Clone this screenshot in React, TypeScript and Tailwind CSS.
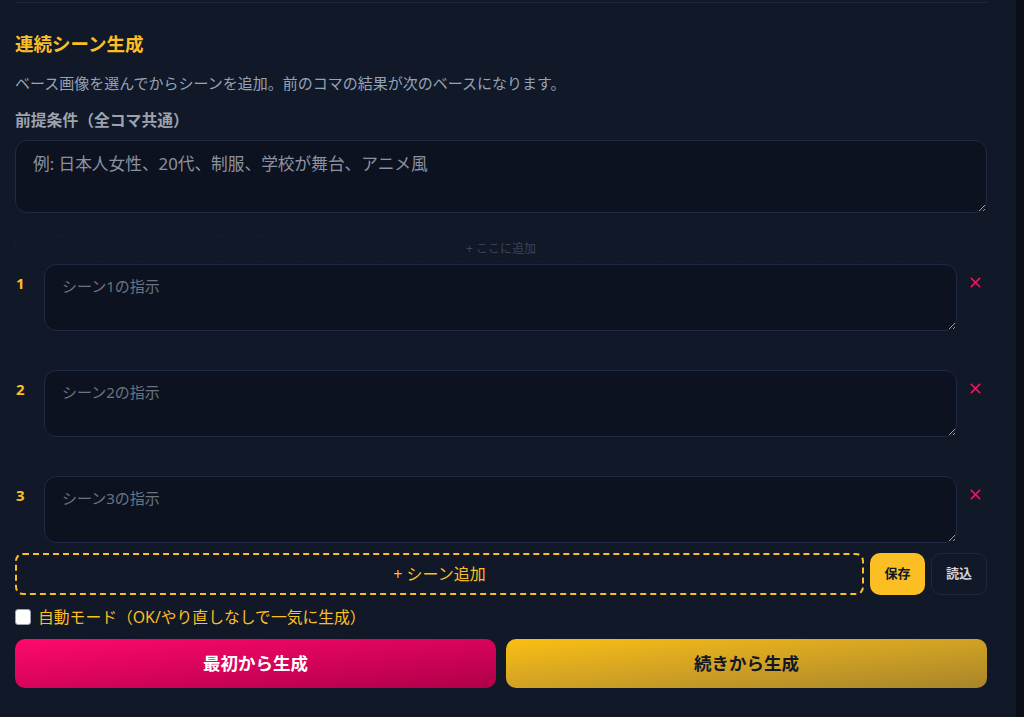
import React from "react";

const font = { fontFamily: '"Noto Sans", "Noto Sans CJK JP", sans-serif' };

function XIcon() {
  return (
    <svg width="11" height="11" viewBox="0 0 11 11" fill="none" stroke="#e8175f" strokeWidth="1.7" strokeLinecap="square">
      <path d="M1.5 1.5 L9.5 9.5 M9.5 1.5 L1.5 9.5" />
    </svg>
  );
}

function Scene({ n }: { n: number }) {
  return (
    <div className="flex items-start">
      <div className="w-[29px] pl-[1px] pt-[9px] text-[15px] font-bold text-[#fbbf24] leading-5">{n}</div>
      <textarea
        className="h-[67px] w-[913px] rounded-[12px] border border-[#1f2a44] bg-[#0d1220] px-[17px] pt-[11px] text-[15px] leading-5 text-gray-300 placeholder:text-[#6b7280] outline-none"
        placeholder={`シーン${n}の指示`}
        style={font}
      />
      <div className="ml-[13px] pt-[13px]">
        <XIcon />
      </div>
    </div>
  );
}

export default function App() {
  return (
    <div className="flex h-[717px] w-[1024px] overflow-hidden bg-[#111827]" style={font}>
      <div className="w-[1016px] pl-[15px] pr-[29px] pt-[2px]">
        <div className="border-t border-[#1e293b] pt-[27px]">
          <h2 className="text-[18.5px] font-bold leading-7 text-[#fbbf24]">連続シーン生成</h2>
          <p className="mt-[15px] text-[15px] leading-5 text-[#94a3b8]">
            ベース画像を選んでからシーンを追加。前のコマの結果が次のベースになります。
          </p>
          <div className="mt-[17px] text-[15.8px] font-semibold leading-5 text-[#9ca3af]">前提条件（全コマ共通）</div>
          <textarea
            className="mt-[10px] block h-[73px] w-full rounded-[12px] border border-[#1f2a44] bg-[#0d1220] px-[17px] pt-[11px] text-[16.7px] leading-6 text-gray-300 placeholder:text-[#8b93a1] outline-none"
            placeholder="例: 日本人女性、20代、制服、学校が舞台、アニメ風"
            style={font}
          />
          <div className="mt-[23px] flex h-[26px] items-center justify-center rounded-[6px] border border-dashed border-[#161e2e] text-[12px] text-[#3b4455]">
            + ここに追加
          </div>
          <div className="mt-[2px] flex flex-col gap-[39px]">
            <Scene n={1} />
            <Scene n={2} />
            <Scene n={3} />
          </div>
          <div className="mt-[10px] flex gap-[6px]">
            <button className="flex h-[42px] flex-1 items-center justify-center rounded-[8px] border-2 border-dashed border-[#fbbf24] text-[16px] text-[#fbbf24]">
              + シーン追加
            </button>
            <button className="h-[42px] w-[55px] rounded-[10px] bg-[#fbbf24] text-[13px] font-bold text-[#111827]">保存</button>
            <button className="h-[42px] w-[56px] rounded-[10px] border border-[#1e293b] text-[13px] font-bold text-[#d1d5db]">読込</button>
          </div>
          <label className="mt-[12px] flex items-center gap-[7px]">
            <span className="h-[16px] w-[16px] rounded-[3px] border border-[#9ca3af] bg-white" />
            <span className="text-[15.8px] leading-5 text-[#fbbf24]">自動モード（OK/やり直しなしで一気に生成）</span>
          </label>
          <div className="mt-[12px] flex gap-[10px]">
            <button className="h-[49px] flex-1 rounded-[10px] bg-gradient-to-br from-[#ff0a6c] to-[#b0004a] text-[17.5px] font-bold text-white">
              最初から生成
            </button>
            <button className="h-[49px] flex-1 rounded-[10px] bg-gradient-to-br from-[#fbbf0f] to-[#a8852a] text-[17.5px] font-bold text-[#111827]">
              続きから生成
            </button>
          </div>
        </div>
      </div>
      <div className="flex-1 bg-[#0a0e17]" />
    </div>
  );
}
